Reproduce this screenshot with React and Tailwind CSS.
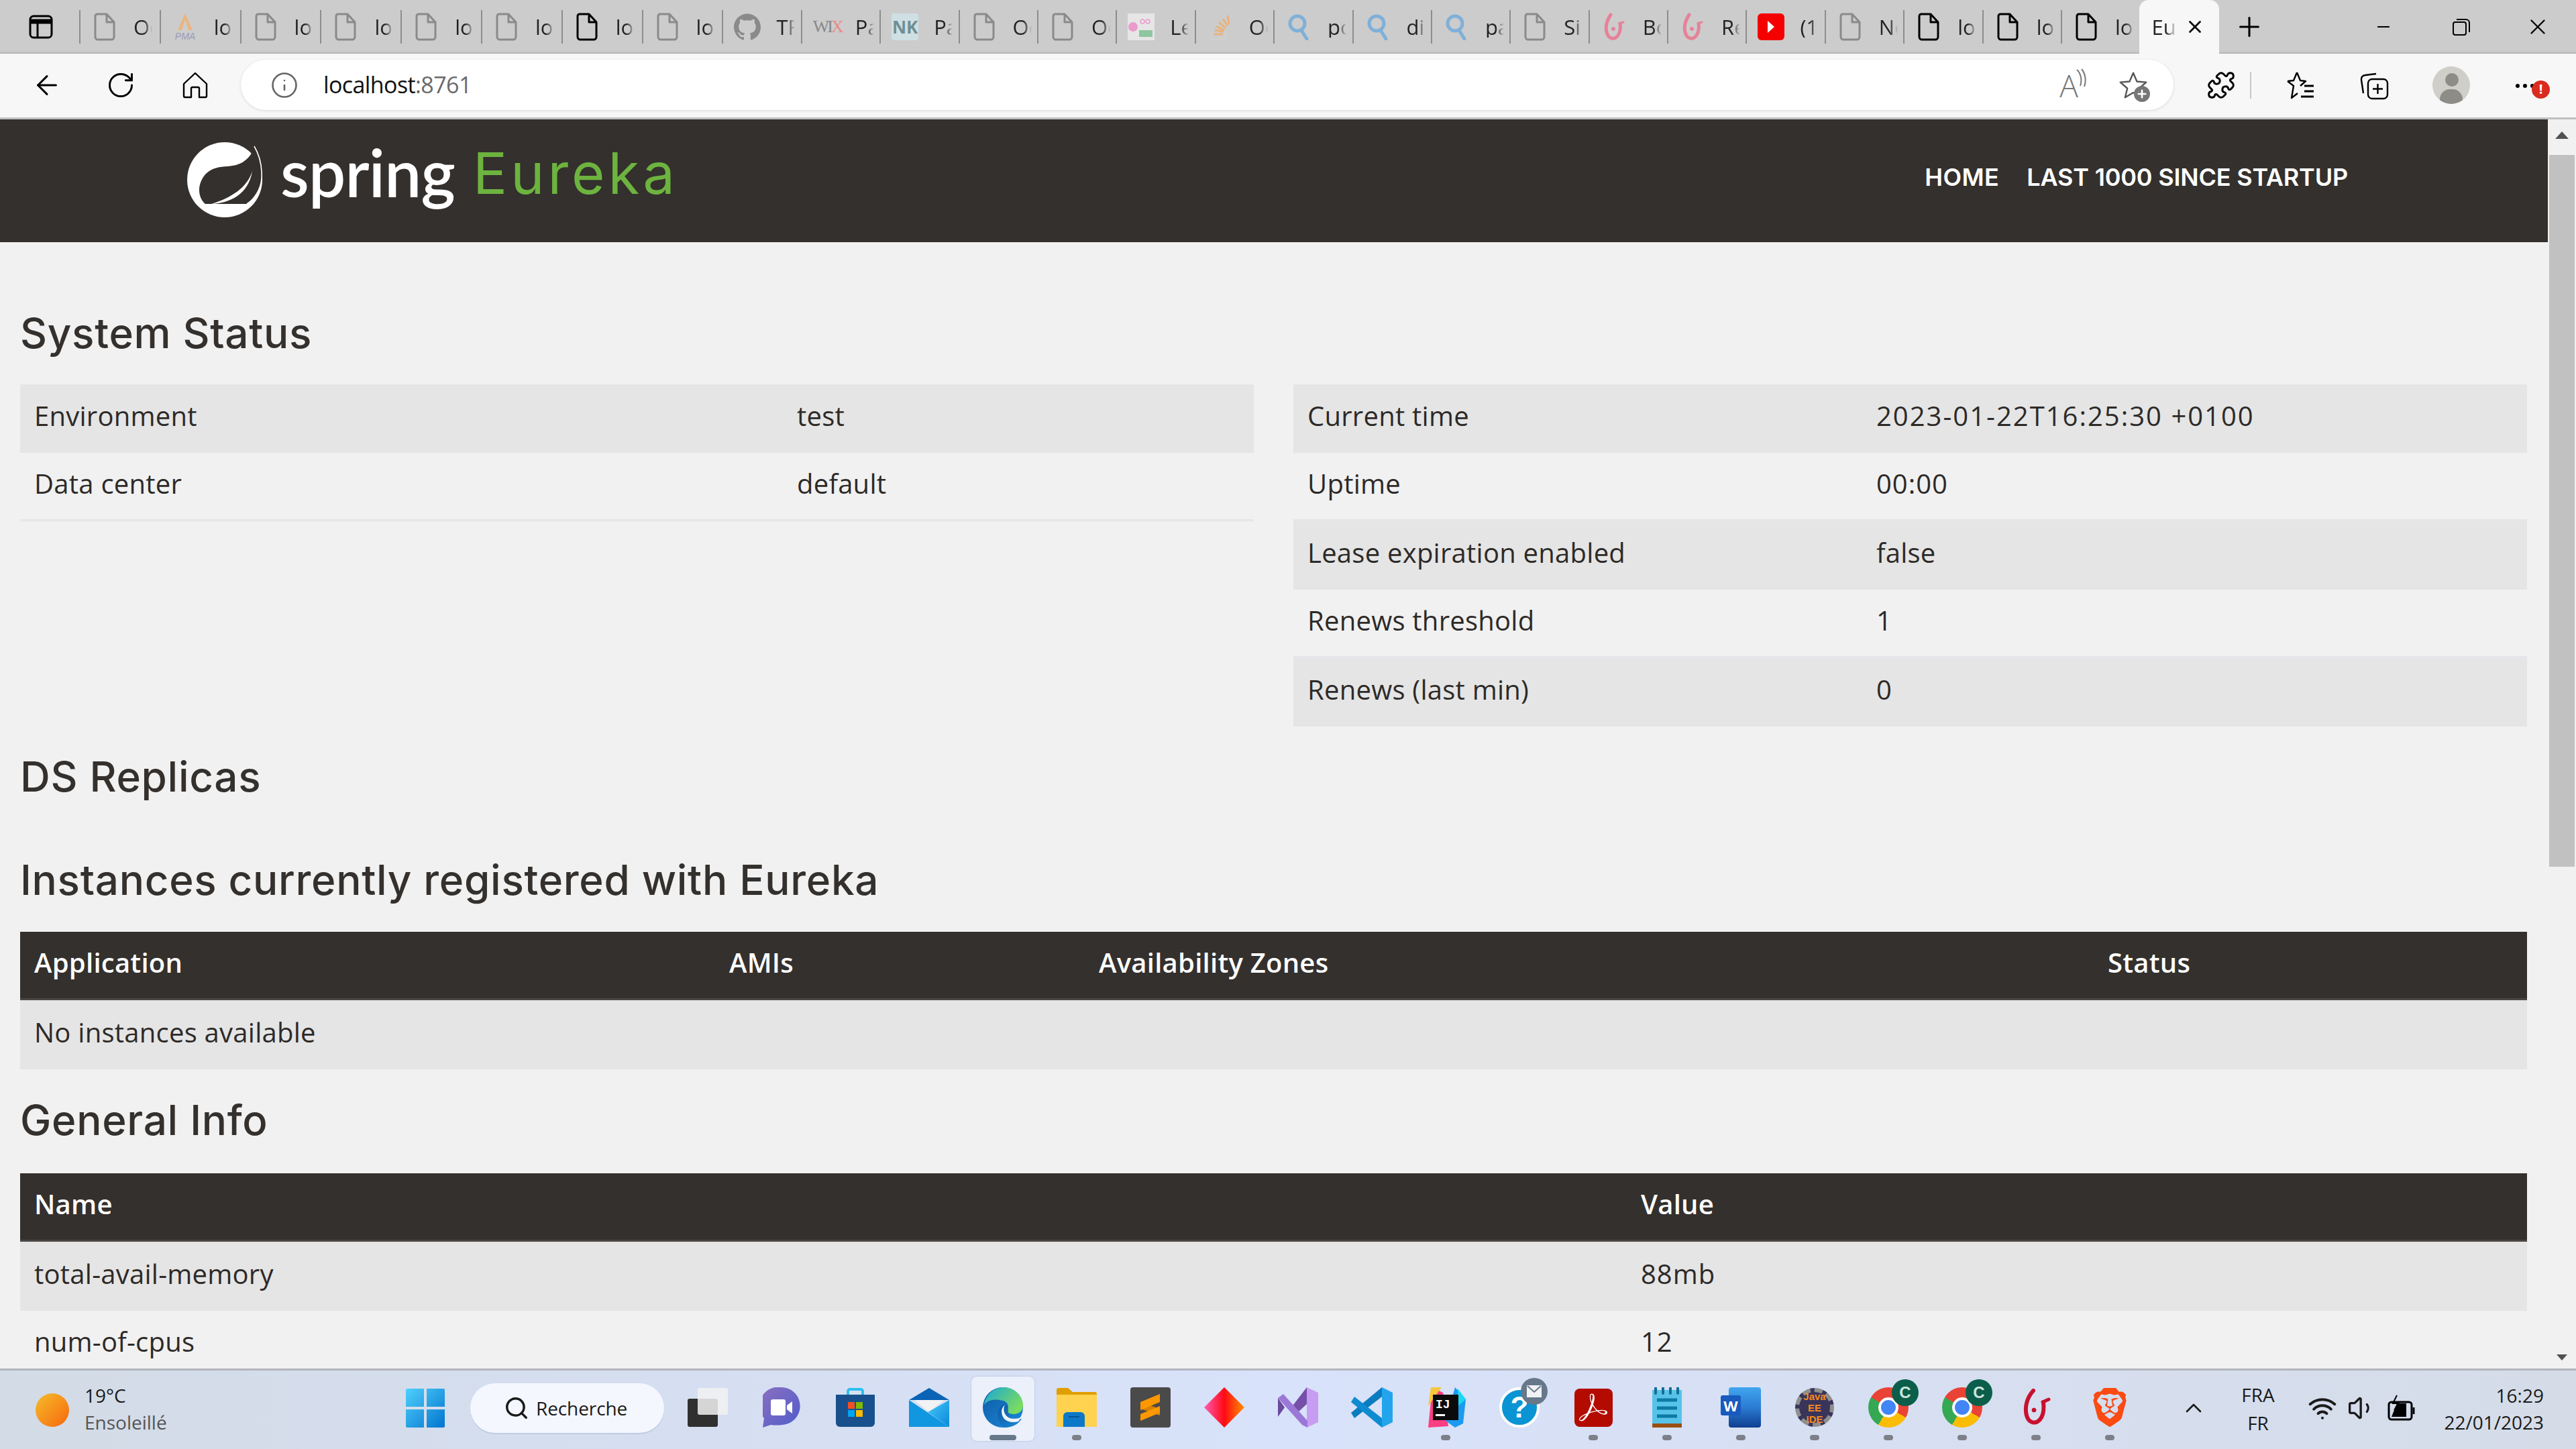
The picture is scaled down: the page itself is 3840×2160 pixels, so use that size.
import React from "react";
import { ArrowLeft, RotateCw, Info, Puzzle, Search, Plus, X, Minus, ChevronUp, Wifi, Volume1 } from "lucide-react";
import { SiGithub, SiBrave, SiAdobeacrobatreader } from "react-icons/si";

/* ---------------- Tab strip data ---------------- */
const Doc = ({ dark }) => (
  <svg width="32" height="42" viewBox="0 0 32 42" fill="none" stroke={dark ? "#000" : "#8a8a8a"} strokeWidth="3">
    <path d="M5 2h14l11 12v22a4 4 0 0 1-4 4H6a4 4 0 0 1-4-4V5a3 3 0 0 1 3-3z M19 2v12h11" strokeLinejoin="round" />
  </svg>
);
const Pma = () => (
  <svg width="42" height="42" viewBox="0 0 42 42">
    <path d="M21 1 L10 26 h6 L21 10 L26 26 h6z" fill="#e8b67e" />
    <text x="21" y="40" textAnchor="middle" fontSize="14" fontStyle="italic" fill="#9a9ab8" fontFamily="'Liberation Sans'">PMA</text>
  </svg>
);
const Wix = () => (
  <span className="w-10 text-[26px] font-['Liberation_Serif'] text-[#888] leading-none tracking-[-3px]">
    WI<span className="text-[#e98a8a]">X</span>
  </span>
);
const Nk = () => (
  <span className="w-10 h-10 rounded bg-[#cfe0e4] flex items-center justify-center text-[26px] font-bold text-[#6f8f94] font-['Open_Sans'] leading-none">NK</span>
);
const Skills = () => (
  <svg width="40" height="40" viewBox="0 0 40 40">
    <rect width="40" height="40" fill="#e6e6e6" />
    <circle cx="8" cy="20" r="7" fill="#ea9bcb" />
    <circle cx="22" cy="12" r="3" fill="none" stroke="#ea9bcb" strokeWidth="1.5" />
    <circle cx="30" cy="12" r="3" fill="none" stroke="#ea9bcb" strokeWidth="1.5" />
    <rect x="17" y="25" width="20" height="10" fill="#8fc5a0" />
  </svg>
);
const Stack = () => (
  <svg width="32" height="40" viewBox="0 0 32 40">
    <path d="M2 26v12h22V26" fill="none" stroke="#cfcfcf" strokeWidth="3" />
    <path d="M7 31h13M8 25l13 2M10 19l12 6M14 13l10 9M20 8l7 11M27 3l2 13" stroke="#e9b27a" strokeWidth="3" />
  </svg>
);
const Mag = () => (
  <svg width="34" height="40" viewBox="0 0 34 40" fill="none" stroke="#7fb0d8" strokeWidth="5">
    <circle cx="15" cy="15" r="11" />
    <path d="M21 25l8 13" strokeLinecap="round" />
  </svg>
);
const Bo = () => (
  <svg width="32" height="42" viewBox="0 0 32 42" fill="none" stroke="#e68298" strokeWidth="5" strokeLinecap="round">
    <path d="M11 3C5 12 2 22 6 32c3 7 10 8 14 4 5-5 6-13 5-20" />
    <circle cx="15" cy="24" r="2.5" fill="#e68298" strokeWidth="1" />
    <path d="M24 16l6-2" strokeWidth="3" />
  </svg>
);
const Yt = () => (
  <span className="w-10 h-[40px] bg-[#f40000] rounded-md flex items-center justify-center">
    <span className="w-0 h-0 border-y-[9px] border-y-transparent border-l-[10px] border-l-white" />
  </span>
);

const TABS = [
  { k: "a", icon: <Doc />, t: "Oc" },
  { k: "b", icon: <Pma />, t: "lo" },
  { k: "c", icon: <Doc />, t: "lo" },
  { k: "d", icon: <Doc />, t: "lo" },
  { k: "e", icon: <Doc />, t: "lo" },
  { k: "f", icon: <Doc />, t: "lo" },
  { k: "g", icon: <Doc dark />, t: "lo" },
  { k: "h", icon: <Doc />, t: "lo" },
  { k: "i", icon: <SiGithub size={40} color="#8a8a8a" />, t: "TF", narrow: true },
  { k: "j", icon: <Wix />, t: "Pa", narrow: true },
  { k: "l", icon: <Nk />, t: "Pa", narrow: true },
  { k: "m", icon: <Doc />, t: "Oc", narrow: true },
  { k: "n", icon: <Doc />, t: "Oc", narrow: true },
  { k: "o", icon: <Skills />, t: "Le", narrow: true },
  { k: "p", icon: <Stack />, t: "Oc", narrow: true },
  { k: "q", icon: <Mag />, t: "pc", narrow: true },
  { k: "r", icon: <Mag />, t: "di", narrow: true },
  { k: "s", icon: <Mag />, t: "pa", narrow: true },
  { k: "t", icon: <Doc />, t: "Si", narrow: true },
  { k: "u", icon: <Bo />, t: "Bo", narrow: true },
  { k: "v", icon: <Bo />, t: "Re", narrow: true },
  { k: "w", icon: <Yt />, t: "(1", narrow: true },
  { k: "x", icon: <Doc />, t: "No", narrow: true },
  { k: "y", icon: <Doc dark />, t: "lo", narrow: true },
  { k: "z", icon: <Doc dark />, t: "lo", narrow: true },
  { k: "zz", icon: <Doc dark />, t: "lo", narrow: true },
];

/* ---------------- Browser chrome ---------------- */
const Tab = ({ tab }) => (
  <div className={`${tab.narrow ? "w-[117.4px]" : "w-[119.8px]"} h-[50px] shrink-0 border-l-2 border-[#8d8d8d] flex items-center pl-[15px] gap-[22px] overflow-hidden`}>
    <span className="w-[42px] shrink-0 flex justify-center">{tab.icon}</span>
    <span className="text-[31px] text-[#222] font-['Open_Sans'] leading-none w-[28px] overflow-hidden [mask-image:linear-gradient(to_right,black_55%,transparent)]">{tab.t}</span>
  </div>
);

const TabStrip = () => (
  <div className="h-[80px] bg-[#cccccc] flex items-center shrink-0 shadow-[inset_0_-3px_3px_-2px_rgba(0,0,0,0.2)]">
    <div className="w-[118px] shrink-0 pl-[43px]">
      <svg width="36" height="36" viewBox="0 0 36 36" fill="none" stroke="#000" strokeWidth="3">
        <rect x="2" y="2" width="32" height="32" rx="5" />
        <path d="M2 10h32" strokeWidth="7" />
        <path d="M13 10v24" />
      </svg>
    </div>
    {TABS.map((t) => <Tab key={t.k} tab={t} />)}
    <div className="w-[119px] h-[80px] shrink-0 bg-[#f7f7f7] rounded-t-[14px] flex items-center pl-[18px]">
      <span className="text-[31px] text-[#222] font-['Open_Sans'] leading-none w-[38px] overflow-hidden [mask-image:linear-gradient(to_right,black_55%,transparent)]">Eu</span>
      <X size={30} strokeWidth={2.2} className="ml-[12px]" />
    </div>
    <Plus size={46} strokeWidth={1.6} className="ml-[22px]" />
    <Minus size={28} strokeWidth={1.6} className="ml-[163px]" />
    <svg width="28" height="28" viewBox="0 0 28 28" fill="none" stroke="#000" strokeWidth="2" className="ml-[88px]">
      <rect x="2" y="7" width="19" height="19" rx="3" />
      <path d="M7 3h14a5 5 0 0 1 5 5v14" />
    </svg>
    <X size={38} strokeWidth={1.5} className="ml-[81px]" />
  </div>
);

const HomeIcon = () => (
  <svg width="38" height="40" viewBox="0 0 38 40" fill="none" stroke="#000" strokeWidth="2.4" strokeLinejoin="round">
    <path d="M19 2 2 18v18a2 2 0 0 0 2 2h9V25a2 2 0 0 1 2-2h8a2 2 0 0 1 2 2v13h9a2 2 0 0 0 2-2V18z" />
  </svg>
);

const Toolbar = () => (
  <div className="h-[98px] bg-[#f7f7f7] border-b-[3px] border-[#c0c0c0] flex items-center shrink-0 pb-[2px]">
    <ArrowLeft size={46} strokeWidth={1.6} className="ml-[47px]" />
    <RotateCw size={44} strokeWidth={1.6} className="ml-[65px]" />
    <span className="ml-[70px]"><HomeIcon /></span>
    <div className="ml-[49px] w-[2881px] h-[75px] bg-white rounded-full shadow-[0_1px_4px_rgba(0,0,0,0.12)] flex items-center pl-[44px]">
      <Info size={42} strokeWidth={1.5} color="#666" />
      <span className="ml-[37px] text-[34px] font-['Open_Sans'] text-[#111] tracking-[-0.6px]">localhost<span className="text-[#6a6a6a]">:8761</span></span>
      <span className="ml-auto flex items-center mr-[38px]">
        <span className="relative text-[46px] leading-none text-[#777] font-['Open_Sans'] font-light mr-[60px]">
          A
          <svg width="16" height="30" viewBox="0 0 16 30" fill="none" stroke="#777" strokeWidth="2" className="absolute -right-[12px] -top-[2px]">
            <path d="M2 2c6 5 8 16 5 24M9 1c6 7 7 18 4 26" />
          </svg>
        </span>
        <span className="relative">
          <svg width="44" height="44" viewBox="0 0 24 24" fill="none" stroke="#555" strokeWidth="1.3" strokeLinejoin="round">
            <path d="M12 2l3 7 7.5.6-5.7 5 1.8 7.4L12 18l-6.6 4 1.8-7.4-5.7-5L9 9z" />
          </svg>
          <span className="absolute -right-[3px] -bottom-[3px] w-[24px] h-[24px] rounded-full bg-[#777] text-white flex items-center justify-center">
            <Plus size={18} strokeWidth={3.5} />
          </span>
        </span>
      </span>
    </div>
    <Puzzle size={44} strokeWidth={1.6} className="ml-[49px]" />
    <span className="ml-[21px] w-[2px] h-[40px] bg-[#c8c8c8]" />
    <svg width="44" height="42" viewBox="0 0 44 42" fill="none" stroke="#000" strokeWidth="2.4" strokeLinejoin="round" className="ml-[52px]">
      <path d="M16 2l5 12 8 1-8 7M2 15l9 7-3 18 9-7M2 15l9-1 5-12" />
      <path d="M27 22h14M27 30h14M22 38h19" strokeWidth="3" />
    </svg>
    <svg width="44" height="44" viewBox="0 0 44 44" fill="none" stroke="#000" strokeWidth="2.4" className="ml-[65px]">
      <rect x="13" y="13" width="29" height="29" rx="6" />
      <path d="M27.5 20v15M20 27.5h15" />
      <path d="M25 5l-16 2a6 6 0 0 0-6 7l3 20" />
    </svg>
    <div className="relative ml-[65px] w-[56px] h-[56px] rounded-full bg-[#cfcec9] overflow-hidden">
      <span className="absolute left-[19px] top-[10px] w-[20px] h-[20px] rounded-full bg-[#8e8c87]" />
      <span className="absolute left-[11px] top-[34px] w-[34px] h-[30px] rounded-full bg-[#8e8c87]" />
    </div>
    <div className="relative ml-[68px] w-[32px] h-[8px] flex gap-[5px] mt-[4px]">
      <span className="w-[6px] h-[6px] rounded-full bg-black" />
      <span className="w-[6px] h-[6px] rounded-full bg-black" />
      <span className="w-[6px] h-[6px] rounded-full bg-black" />
      <span className="absolute left-[24px] -top-[5px] w-[27px] h-[27px] rounded-full bg-[#d92b20] text-white text-[20px] font-bold flex items-center justify-center font-['Open_Sans']">!</span>
    </div>
  </div>
);

/* ---------------- Eureka page ---------------- */
const SpringLeaf = () => (
  <svg width="114" height="114" viewBox="0 0 114 114" className="mb-[4px]">
    <circle cx="56" cy="57" r="56" fill="#fff" />
    <path d="M100 8C93 30 76 36 60 37 40 38 27 43 20 61c-5 14 0 26 7 32h62c11-7 21-22 22-38 1-20-4-35-11-47z" fill="#34302d" />
    <path d="M100 7c7 12 12 28 11 48-1 16-11 31-22 38" fill="none" stroke="#fff" strokeWidth="1.6" />
    <path d="M97 44C90 68 66 84 36 93c28-1 56-15 61-49z" fill="#fff" />
    <path d="M34 94h56c-12 9-40 6-56 0z" fill="#fff" />
  </svg>
);

const Heading = ({ className, children }) => (
  <h2 className={`h-[80px] flex items-center text-[62px] leading-none font-medium text-[#34302d] font-['Inter'] tracking-[0.7px] ${className}`}>{children}</h2>
);

const Row = ({ cells, shaded, dark, tall }) => (
  <div className={`flex items-center pb-[8px] text-[40px] tracking-[0.25px] font-['Open_Sans'] ${tall ? "h-[103px]" : "h-[102px]"} ${dark ? "bg-[#34302d] text-white font-semibold border-b-[3px] border-[#4a4643]" : "text-[#2d2a28]"} ${shaded ? "bg-[#e5e5e5]" : ""} ${!dark && !shaded ? "border-b-[3px] border-[#e6e6ea]" : ""}`}>
    {cells.map(([txt, cls]) => <div key={txt} className={cls}>{txt}</div>)}
  </div>
);

const Nav = () => (
  <div className="h-[183px] bg-[#34302d] flex items-center pl-[279px] shrink-0">
    <SpringLeaf />
    <span className="ml-[25px] text-[98px] leading-none text-white font-['Lato'] font-semibold mb-[28px] tracking-[-0.8px]">spring</span>
    <span className="ml-[27px] text-[85px] leading-none text-[#6db33f] font-['Inter'] mb-[22px] tracking-[5px]">Eureka</span>
    <span className="ml-auto text-[36px] text-white font-['Inter'] font-semibold mr-[41px] tracking-[0.4px] mb-[12px]">HOME</span>
    <span className="text-[36px] text-white font-['Inter'] font-semibold mr-[298px] tracking-[-0.2px] mb-[12px]">LAST 1000 SINCE STARTUP</span>
  </div>
);

const Page = () => (
  <div className="flex-1 min-w-0 overflow-hidden">
    <Nav />
    <div className="pl-[30px] pr-[31px]">
      <Heading className="mt-[96px] mb-[36px]">System Status</Heading>
      <div className="flex gap-[59px] items-start">
        <div className="w-[1839px] shrink-0">
          <Row shaded cells={[["Environment", "w-[1158px] pl-[21px]"], ["test", ""]]} />
          <Row cells={[["Data center", "w-[1158px] pl-[21px]"], ["default", ""]]} />
        </div>
        <div className="flex-1">
          <Row shaded cells={[["Current time", "w-[869px] pl-[21px]"], ["2023-01-22T16:25:30 +0100", "tracking-[2px]"]]} />
          <Row cells={[["Uptime", "w-[869px] pl-[21px]"], ["00:00", "tracking-[1px]"]]} />
          <Row shaded cells={[["Lease expiration enabled", "w-[869px] pl-[21px]"], ["false", ""]]} />
          <Row cells={[["Renews threshold", "w-[869px] pl-[21px]"], ["1", ""]]} />
          <Row shaded cells={[["Renews (last min)", "w-[869px] pl-[21px]"], ["0", ""]]} />
        </div>
      </div>
      <Heading className="mt-[35px]">DS Replicas</Heading>
      <Heading className="mt-[74px] mb-[37px]">Instances currently registered with Eureka</Heading>
      <Row dark cells={[["Application", "w-[1057px] pl-[21px]"], ["AMIs", "w-[551px]"], ["Availability Zones", "w-[1504px]"], ["Status", ""]]} />
      <Row shaded tall cells={[["No instances available", "pl-[21px]"]]} />
      <Heading className="mt-[36px] mb-[39px]">General Info</Heading>
      <Row dark cells={[["Name", "w-[2416px] pl-[21px]"], ["Value", ""]]} />
      <Row shaded tall cells={[["total-avail-memory", "w-[2416px] pl-[21px]"], ["88mb", "tracking-[1px]"]]} />
      <Row cells={[["num-of-cpus", "w-[2416px] pl-[21px]"], ["12", "tracking-[1px]"]]} />
    </div>
  </div>
);

const Scrollbar = () => (
  <div className="w-[42px] shrink-0 bg-[#f1f1f1] flex flex-col items-center">
    <span className="mt-[18px] w-0 h-0 border-x-[10px] border-x-transparent border-b-[11px] border-b-[#505050]" />
    <span className="mt-[24px] w-[38px] h-[1061px] bg-[#c1c1c1]" />
    <span className="mt-auto mb-[12px] w-0 h-0 border-x-[8px] border-x-transparent border-t-[9px] border-t-[#505050]" />
  </div>
);

/* ---------------- Taskbar icons ---------------- */
const Win = () => (
  <svg width="58" height="58" viewBox="0 0 58 58">
    <defs>
      <linearGradient id="wg" x1="0" y1="0" x2="1" y2="1"><stop offset="0" stopColor="#4fd0fb" /><stop offset="1" stopColor="#0374cf" /></linearGradient>
    </defs>
    <path d="M2 0h25v27H0V2a2 2 0 0 1 2-2zM31 0h25a2 2 0 0 1 2 2v25H31zM0 31h27v27H2a2 2 0 0 1-2-2zM31 31h27v25a2 2 0 0 1-2 2H31z" fill="url(#wg)" />
  </svg>
);
const TaskView = () => (
  <svg width="60" height="58" viewBox="0 0 60 58">
    <rect x="0" y="16" width="45" height="42" rx="3" fill="#303030" />
    <rect x="15" y="0" width="45" height="40" rx="3" fill="#f2f2f2" fillOpacity="0.85" />
  </svg>
);
const Teams = () => (
  <svg width="56" height="60" viewBox="0 0 56 60">
    <defs>
      <linearGradient id="tg" x1="0" y1="0" x2="1" y2="1"><stop offset="0" stopColor="#8c70c0" /><stop offset="1" stopColor="#4f5ccb" /></linearGradient>
    </defs>
    <path d="M28 0a28 28 0 0 1 10 54c-8 3-20 3-26 2l-12 4 2-14A28 28 0 0 1 28 0z" fill="url(#tg)" />
    <rect x="12" y="18" width="22" height="24" rx="3" fill="#fff" />
    <path d="M36 27l8-6v18l-8-6z" fill="#fff" />
  </svg>
);
const Store = () => (
  <svg width="58" height="58" viewBox="0 0 58 58">
    <path d="M18 10V5a3 3 0 0 1 3-3h16a3 3 0 0 1 3 3v5" fill="none" stroke="#2bc0ef" strokeWidth="4" />
    <path d="M0 10h58v42a6 6 0 0 1-6 6H6a6 6 0 0 1-6-6z" fill="#17508c" />
    <rect x="18" y="21" width="10" height="10" fill="#f25022" />
    <rect x="30" y="21" width="10" height="10" fill="#7fba00" />
    <rect x="18" y="33" width="10" height="10" fill="#00a4ef" />
    <rect x="30" y="33" width="10" height="10" fill="#ffb900" />
  </svg>
);
const Mail = () => (
  <svg width="60" height="58" viewBox="0 0 60 58">
    <defs>
      <linearGradient id="mg" x1="0" y1="0" x2="1" y2="1"><stop offset="0" stopColor="#47c9f9" /><stop offset="1" stopColor="#0a88dc" /></linearGradient>
    </defs>
    <path d="M30 0 60 18H0z" fill="#0a63b5" />
    <path d="M8 18h44L30 36z" fill="#f3f3f3" />
    <path d="M0 18l60 40H0z" fill="#1196e0" />
    <path d="M60 18v40L28 36z" fill="url(#mg)" />
  </svg>
);
const Edge = () => (
  <svg width="60" height="60" viewBox="0 0 60 60">
    <defs>
      <linearGradient id="eg" x1="0" y1="0" x2="1" y2="0.6"><stop offset="0" stopColor="#1aa7d8" /><stop offset="1" stopColor="#7bdc5e" /></linearGradient>
      <linearGradient id="eb" x1="0" y1="0" x2="1" y2="1"><stop offset="0" stopColor="#0c59a4" /><stop offset="1" stopColor="#1e8bd8" /></linearGradient>
    </defs>
    <circle cx="30" cy="30" r="30" fill="url(#eb)" />
    <path d="M2 26C5 10 17 0 31 0c16 0 29 12 29 27 0 8-6 13-14 13-6 0-11-3-9-8 2-3 1-9-6-12C19 17 8 18 2 26z" fill="url(#eg)" />
    <path d="M33 25c7 3 4 11 5 15 1 6 8 9 14 8l6-1c-5 8-14 13-25 13 -7-3-13-14-10-24 2-6 6-11 10-11z" fill="url(#eb)" />
    <path d="M34 26c-4 3-3 11 0 15 3 5 11 8 23 4l-4 6c-8 2-16 1-21-4-5-6-6-17 2-21z" fill="#f1f4fb" />
  </svg>
);
const Folder = () => (
  <svg width="60" height="58" viewBox="0 0 60 58">
    <path d="M0 3a3 3 0 0 1 3-3h14l7 6h33a3 3 0 0 1 3 3v10H0z" fill="#e09f00" />
    <path d="M0 10h60v48H0z" fill="#ffd24f" />
    <path d="M10 58V42a6 6 0 0 1 6-6h20a6 6 0 0 1 6 6v16z" fill="#0d78c8" />
    <path d="M18 43h16" stroke="#0a4f90" strokeWidth="2" />
  </svg>
);
const Sublime = () => (
  <svg width="60" height="60" viewBox="0 0 60 60">
    <rect width="60" height="60" rx="4" fill="#4a4a4a" />
    <path d="M15 22 44 32V42L15 32z" fill="#d98300" />
    <path d="M44 10 15 22V34L44 22z" fill="#ff9800" />
    <path d="M44 28 15 40V50L44 38z" fill="#ff9800" />
  </svg>
);
const Diamond = () => (
  <svg width="60" height="60" viewBox="0 0 60 60">
    <defs>
      <linearGradient id="dg" x1="0" y1="0" x2="1" y2="0"><stop offset="0" stopColor="#ff5ab4" /><stop offset="0.5" stopColor="#ff0a14" /><stop offset="1" stopColor="#ff9000" /></linearGradient>
    </defs>
    <path d="M30 0 60 30 30 60 0 30z" fill="url(#dg)" />
  </svg>
);
const VisualStudio = () => (
  <svg width="60" height="60" viewBox="0 0 60 60">
    <path d="M43 0 60 8v44l-17 8z" fill="#c79df3" />
    <path d="M43 0v25l-14 13L20 30z" fill="#7650a8" />
    <path d="M0 16l8-6 36 40v10l-8-4z" fill="#9b78d6" />
    <path d="M0 16l10 14v-0L0 44z" fill="#6a4a9c" />
  </svg>
);
const VsCode = () => (
  <svg width="62" height="60" viewBox="0 0 62 60">
    <path d="M46 0 62 8v44l-16 8z" fill="#22a5ec" />
    <path d="M46 0 0 38l5 8L46 14z" fill="#0b7cbf" />
    <path d="M46 60 0 22l5-8 41 32z" fill="#0f8bd1" />
  </svg>
);
const Idea = () => (
  <svg width="60" height="60" viewBox="0 0 60 60">
    <path d="M10 0l16 8 8 50-30 2z" fill="#fc3e83" />
    <path d="M8 0h16l-20 28z" fill="#f8c83a" />
    <path d="M44 0l16 18-4 36-12 6-14-10z" fill="#1a9bf0" />
    <path d="M48 2l12 16-12 10z" fill="#18d8f5" />
    <rect x="11" y="11" width="38" height="38" fill="#0b0b0b" />
    <text x="15" y="31" fontSize="18" fontWeight="700" fill="#fff" fontFamily="'Liberation Mono'">IJ</text>
    <rect x="15" y="40" width="14" height="3" fill="#fff" />
  </svg>
);
const Help = () => (
  <div className="relative w-[60px] h-[60px] rounded-full bg-[#0a94d4] border-[4px] border-white flex items-center justify-center text-white font-black text-[44px] leading-none font-['Liberation_Sans']">
    ?
    <span className="absolute -right-[16px] -top-[18px] w-[40px] h-[40px] rounded-full bg-[#66788a] flex items-center justify-center">
      <svg width="24" height="20" viewBox="0 0 24 20" fill="#fff"><path d="M1 1h22v18H1z" fillOpacity="0.9" /><path d="M2 2l10 9 10-9" fill="none" stroke="#66788a" strokeWidth="2" /></svg>
    </span>
  </div>
);
const Acrobat = () => (
  <span className="w-[57px] h-[57px] rounded-[8px] bg-[#b30b00] flex items-center justify-center">
    <SiAdobeacrobatreader size={42} color="#fff" />
  </span>
);
const Notepad = () => (
  <svg width="44" height="60" viewBox="0 0 44 60">
    <rect y="4" width="44" height="50" fill="#58c3e8" />
    <rect y="54" width="44" height="6" fill="#9a4f12" />
    <path d="M5 0v9M16 0v9M27 0v9M38 0v9" stroke="#136e95" strokeWidth="4" strokeLinecap="round" />
    <path d="M7 19h30M7 31h30M7 43h30" stroke="#0d7aa6" strokeWidth="5" />
  </svg>
);
const Word = () => (
  <div className="relative w-[60px] h-[60px]">
    <span className="absolute right-0 top-0 w-[48px] h-[60px] bg-gradient-to-b from-[#41a5ee] via-[#2b7cd3] to-[#103f91] rounded-[4px]" />
    <span className="absolute left-0 top-[12px] w-[30px] h-[30px] bg-[#185abd] rounded-[3px] text-white text-[22px] font-bold flex items-center justify-center leading-none font-['Open_Sans']">W</span>
  </div>
);
const JavaEE = () => (
  <div className="relative w-[58px] h-[58px] rounded-full bg-[#38345a] border-[6px] border-dashed border-[#8f8f8f] flex items-center justify-center text-center text-[#f58a1f] text-[15px] leading-[17px] font-bold font-['Liberation_Sans']">
    Java EE<br />IDE
  </div>
);
const Chrome = () => (
  <div className="relative w-[60px] h-[60px] rounded-full bg-[conic-gradient(#ea4335_0deg,#ea4335_120deg,#fbbc04_120deg,#fbbc04_210deg,#34a853_210deg,#34a853_300deg,#ea4335_300deg)] flex items-center justify-center">
    <span className="w-[30px] h-[30px] rounded-full bg-[#4285f4] border-[4px] border-white" />
    <span className="absolute -right-[15px] -top-[12px] w-[40px] h-[40px] rounded-full bg-[#0b5f4a] text-[#cfe6df] text-[24px] font-bold flex items-center justify-center font-['Liberation_Sans']">C</span>
  </div>
);
const BoBig = () => (
  <svg width="48" height="56" viewBox="0 0 48 56" fill="none" stroke="#c8102e" strokeWidth="6" strokeLinecap="round">
    <path d="M20 3C10 14 7 28 10 40c3 11 13 14 20 6 6-7 6-17 5-26" />
    <circle cx="21" cy="32" r="3" fill="#c8102e" strokeWidth="1" />
    <path d="M34 20l9-4" strokeWidth="5" />
  </svg>
);
const Brave = () => <SiBrave size={58} color="#fb4a12" />;

const DOCK = [
  { k: "task", icon: <TaskView /> },
  { k: "teams", icon: <Teams /> },
  { k: "store", icon: <Store /> },
  { k: "mail", icon: <Mail /> },
  { k: "edge", icon: <Edge />, active: true },
  { k: "folder", icon: <Folder />, dot: true },
  { k: "sublime", icon: <Sublime /> },
  { k: "diamond", icon: <Diamond /> },
  { k: "vs", icon: <VisualStudio /> },
  { k: "code", icon: <VsCode /> },
  { k: "idea", icon: <Idea />, dot: true },
  { k: "help", icon: <Help /> },
  { k: "acro", icon: <Acrobat />, dot: true },
  { k: "note", icon: <Notepad />, dot: true },
  { k: "word", icon: <Word />, dot: true },
  { k: "javaee", icon: <JavaEE />, dot: true },
  { k: "chrome1", icon: <Chrome />, dot: true },
  { k: "chrome2", icon: <Chrome />, dot: true },
  { k: "bo", icon: <BoBig />, dot: true },
  { k: "brave", icon: <Brave />, dot: true },
];

const DockItem = ({ item }) => (
  <div className="relative w-[110px] h-[117px] shrink-0 flex items-center justify-center">
    {item.active && <span className="absolute left-[8px] top-[9px] w-[94px] h-[96px] rounded-[8px] bg-white/50 shadow-[0_0_2px_rgba(90,120,170,0.5)]" />}
    <span className="relative mb-[7px] flex">{item.icon}</span>
    {item.dot && <span className="absolute left-[48px] top-[96px] w-[14px] h-[8px] rounded-full bg-[#7d8088]" />}
    {item.active && <span className="absolute left-[35px] top-[96px] w-[40px] h-[8px] rounded-full bg-[#66788a]" />}
  </div>
);

const Taskbar = () => (
  <div className="h-[120px] shrink-0 border-t-[3px] border-[#b2b5bd] flex items-center bg-gradient-to-r from-[#d3dbe6] via-[#d8e2fa] to-[#d5dce8] font-['Open_Sans'] text-[#1a1a1a]">
    <div className="w-[579px] shrink-0 pl-[53px] flex items-center">
      <span className="w-[50px] h-[50px] rounded-full bg-gradient-to-br from-[#f5bb2a] to-[#f4650c]" />
      <div className="ml-[23px] mb-[3px] text-[28px] leading-[40px]">
        <div>19°C</div>
        <div className="text-[#555]">Ensoleillé</div>
      </div>
    </div>
    <div className="w-[110px] flex justify-center mb-[5px]"><Win /></div>
    <div className="ml-[12px] mr-[10px] mb-[5px] w-[289px] h-[74px] rounded-full bg-[#f4f7fe] shadow-[0_2px_0_rgba(170,185,215,0.5)] flex items-center pl-[50px] text-[28px] tracking-[-0.1px]">
      <Search size={38} strokeWidth={2.2} />
      <span className="ml-[10px]">Recherche</span>
    </div>
    {DOCK.map((d) => <DockItem key={d.k} item={d} />)}
    <ChevronUp size={40} strokeWidth={1.6} className="ml-[50px] mb-[5px]" />
    <div className="ml-[50px] w-[52px] text-center text-[28px] leading-[42px] mb-[3px]">
      <div>FRA</div>
      <div>FR</div>
    </div>
    <Wifi size={44} strokeWidth={2.2} className="ml-[48px] mb-[5px]" />
    <Volume1 size={44} strokeWidth={1.8} className="ml-[15px] mb-[5px]" />
    <svg width="42" height="42" viewBox="0 0 42 42" fill="none" stroke="#000" strokeWidth="3" className="ml-[16px] mb-[5px]">
      <rect x="2" y="12" width="34" height="26" rx="4" />
      <path d="M39 20v10" />
      <path d="M6 34l8-20h14v20z" fill="#000" stroke="none" />
      <path d="M14 2 8 14h8l-6 10" strokeWidth="2" />
    </svg>
    <div className="ml-auto mr-[48px] text-right text-[28px] leading-[40px] mb-[3px]">
      <div>16:29</div>
      <div>22/01/2023</div>
    </div>
  </div>
);

export default function App() {
  return (
    <div className="w-[3840px] h-[2160px] flex flex-col overflow-hidden bg-[#f1f1f1]">
      <TabStrip />
      <Toolbar />
      <div className="flex-1 min-h-0 flex overflow-hidden">
        <Page />
        <Scrollbar />
      </div>
      <Taskbar />
    </div>
  );
}
